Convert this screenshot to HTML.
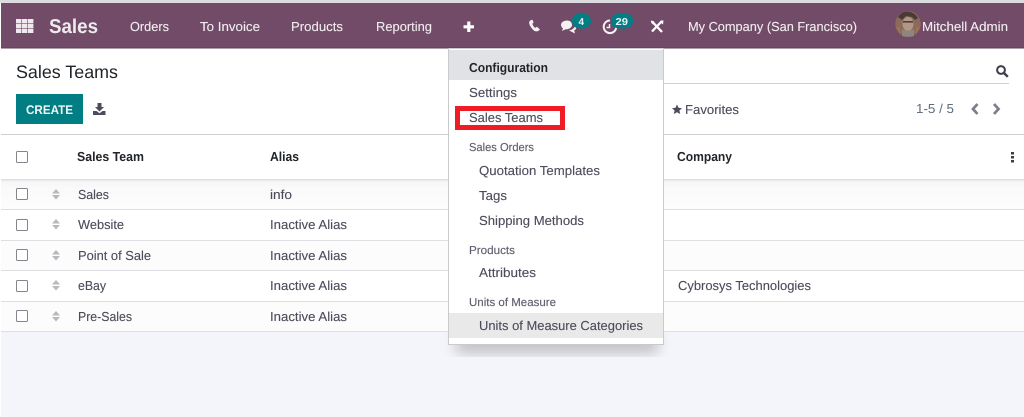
<!DOCTYPE html>
<html><head><meta charset="utf-8"><style>
html,body{margin:0;padding:0;background:#fff;width:1024px;height:417px;overflow:hidden}
svg{display:block;position:absolute;left:0;top:0}
text{font-family:"Liberation Sans",sans-serif;white-space:pre}
.n{font-size:13px;fill:#f0ecef;stroke:#f0ecef;stroke-width:.12px}
.t{font-size:13px;fill:#4c4c5c;stroke:#4c4c5c;stroke-width:.12px}
.h{font-size:13px;font-weight:bold;fill:#212529}
.s{font-size:11.5px;fill:#5f5f6e;stroke:#5f5f6e;stroke-width:.15px}
</style></head><body>
<svg width="1024" height="417" viewBox="0 0 1024 417" xmlns="http://www.w3.org/2000/svg" text-rendering="geometricPrecision">
<defs>
<filter id="sh" x="-20%" y="-20%" width="140%" height="140%"><feGaussianBlur stdDeviation="7"/></filter>
<linearGradient id="g" x1="0" y1="0" x2="0" y2="1"><stop offset="0" stop-color="#f4f4f4"/><stop offset="0.3" stop-color="#fafafa"/><stop offset="1" stop-color="#fcfcfc"/></linearGradient>
</defs>
<!-- page -->
<rect width="1024" height="417" fill="#fff"/>
<rect x="0" y="0" width="1024" height="3" fill="#dcdce0"/>
<rect x="1" y="332" width="1023" height="85" fill="#f4f5fa"/>
<!-- navbar -->
<rect x="1" y="3" width="1023" height="45" fill="#714b67"/>
<rect x="1" y="47.5" width="1023" height="1" fill="#5d3f55"/>
<g fill="#efe9ee">
<rect x="16" y="19" width="5.400" height="4.400"/><rect x="22" y="19" width="5.400" height="4.400"/><rect x="28" y="19" width="5.400" height="4.400"/>
<rect x="16" y="24" width="5.400" height="4.400"/><rect x="22" y="24" width="5.400" height="4.400"/><rect x="28" y="24" width="5.400" height="4.400"/>
<rect x="16" y="29" width="5.400" height="4"/><rect x="22" y="29" width="5.400" height="4"/><rect x="28" y="29" width="5.400" height="4"/>
</g>
<text x="49" y="33" font-size="20" font-weight="bold" fill="#efeaee" textLength="49" lengthAdjust="spacingAndGlyphs">Sales</text>
<text class="n" x="130" y="31" textLength="39" lengthAdjust="spacingAndGlyphs">Orders</text>
<text class="n" x="200" y="31" textLength="60" lengthAdjust="spacingAndGlyphs">To Invoice</text>
<text class="n" x="291" y="31" textLength="52" lengthAdjust="spacingAndGlyphs">Products</text>
<text class="n" x="376" y="31" textLength="56" lengthAdjust="spacingAndGlyphs">Reporting</text>
<path d="M468.800 21.500v10.500M463.500 26.800h10.500" stroke="#fff" stroke-width="3.200" fill="none"/>
<!-- phone -->
<path d="M530.300 20.500c-1.600 1-1.400 3.300 0 5.600 1.500 2.500 3.700 5.300 6 5.300 1.300 0 3.200-1 3.600-1.900l-2.900-2.800-1.700 1.200c-1.300-.5-2.500-2.500-3-4.100l1.300-1.300-1.200-2.900z" fill="#f4f0f3"/>
<!-- chat -->
<path d="M567 20.500c-3.300 0-6 1.900-6 4.500 0 1.400.8 2.600 2 3.400l-1 2.600 3.600-1.700c2.900.2 6.400-1.500 6.400-4.300 0-2.600-1.800-4.500-5-4.500z" fill="#f4f0f3"/>
<path d="M569 30.500l6 3-.8-3c1.300-.7 2-1.700 2-3 0-.8-.2-1.500-.6-2.100-1 2.800-3.500 4.500-6.600 5.100z" fill="#f4f0f3"/>
<rect x="572" y="13.500" width="19" height="15" rx="7.500" fill="#017e84"/>
<text x="578.500" y="25" font-size="10" font-weight="bold" fill="#e9f3f3">4</text>
<!-- clock -->
<path d="M610 20.500a6.300 6.300 0 1 0 6.300 6.300" fill="none" stroke="#f4f0f3" stroke-width="2"/>
<path d="M609.500 24v3.500h-3" fill="none" stroke="#f4f0f3" stroke-width="1.500"/>
<rect x="611" y="13.500" width="22" height="15" rx="7.500" fill="#017e84"/>
<text x="615.500" y="25" font-size="10" font-weight="bold" fill="#e9f3f3" textLength="12.500" lengthAdjust="spacingAndGlyphs">29</text>
<!-- tools -->
<path d="M653 22.500l9 9.500" stroke="#fff" stroke-width="2.300"/>
<path d="M661.500 21.500l-9.500 10" stroke="#fff" stroke-width="2.300"/>
<path d="M651 20.500l3 .8 .8 2.400-2.400 .5-1.400-2zM660.500 20.500l3 0-.5 4-2.500-2z" fill="#fff"/>
<text class="n" x="688" y="31" textLength="169" lengthAdjust="spacingAndGlyphs">My Company (San Francisco)</text>
<!-- avatar -->
<circle cx="908" cy="24" r="12.800" fill="#8a6a58"/>
<path d="M898 17c3-5 8-6 12-5 4 1 6 3 8 6l-3 2-3-3-6-1-4 4z" fill="#4a3a36"/>
<ellipse cx="908" cy="24" rx="5.500" ry="7" fill="#b49684"/>
<rect x="903" y="21" width="10" height="1.600" fill="#4b3d3d"/>
<path d="M902 29c2 2 10 2 12 0l0 7c-3 1-9 1-12 0z" fill="#8d8580"/>
<path d="M896 26l4 2 1 6-2-1zM920 26l-4 2-1 6 2-1z" fill="#a0724f"/>
<text class="n" x="922" y="31" textLength="86" lengthAdjust="spacingAndGlyphs">Mitchell Admin</text>
<!-- control panel -->
<text x="16" y="78" font-size="18" fill="#212529" textLength="102" lengthAdjust="spacingAndGlyphs">Sales Teams</text>
<rect x="16" y="94" width="67" height="30" fill="#017e84"/>
<text x="26" y="114" font-size="12.500" font-weight="bold" fill="#f2f8f8" textLength="47" lengthAdjust="spacingAndGlyphs">CREATE</text>
<path d="M97.500 103h4v4h2.500l-4.500 4.500-4.500-4.500h2.500z" fill="#4c4c5c"/>
<path d="M93 111h3.500l3 2.200 3-2.200h3v4h-12.500z" fill="#4c4c5c"/>
<rect x="664" y="83" width="345" height="1" fill="#cfcfd4"/>
<circle cx="1001" cy="70" r="3.900" fill="none" stroke="#3c3c4a" stroke-width="2"/>
<path d="M1004 73l3.800 3.800" stroke="#3c3c4a" stroke-width="2.400"/>
<path d="M677 104.500l1.500 3.300 3.500.4-2.600 2.300.8 3.500-3.200-1.800-3.200 1.800.8-3.500-2.600-2.300 3.500-.4z" fill="#4c4c5c"/>
<text class="t" x="685" y="114" textLength="54" lengthAdjust="spacingAndGlyphs">Favorites</text>
<text x="916" y="113" font-size="13" fill="#5f6e7c" textLength="38" lengthAdjust="spacingAndGlyphs">1-5 / 5</text>
<path d="M977.500 104l-4.500 5 4.500 5" fill="none" stroke="#7a808c" stroke-width="2.800"/>
<path d="M994 104l4.500 5-4.500 5" fill="none" stroke="#7a808c" stroke-width="2.800"/>
<!-- table -->
<rect x="1" y="134" width="1023" height="1" fill="#cfcfd4"/>
<rect x="1" y="180" width="1023" height="29" fill="url(#g)"/>
<rect x="1" y="241" width="1023" height="29" fill="#fcfcfc"/>
<rect x="1" y="302" width="1023" height="29" fill="#fcfcfc"/>
<g fill="#dfdfe3">
<rect x="1" y="179" width="1023" height="1.500"/>
<rect x="1" y="209" width="1023" height="1"/>
<rect x="1" y="240" width="1023" height="1"/>
<rect x="1" y="270" width="1023" height="1"/>
<rect x="1" y="301" width="1023" height="1"/>
<rect x="1" y="331" width="1023" height="1"/>
</g>
<g fill="#fff" stroke="#85858d" stroke-width="1">
<rect x="16.500" y="151.500" width="11" height="11" rx="1"/>
<rect x="16.500" y="188.500" width="11" height="11" rx="1"/>
<rect x="16.500" y="219.500" width="11" height="11" rx="1"/>
<rect x="16.500" y="249.500" width="11" height="11" rx="1"/>
<rect x="16.500" y="280.500" width="11" height="11" rx="1"/>
<rect x="16.500" y="310.500" width="11" height="11" rx="1"/>
</g>
<g fill="#b8b8be">
<path d="M52 193.500l4-4.500 4 4.500zM52 195l4 4.500 4-4.500z"/>
<path d="M52 223.500l4-4.500 4 4.500zM52 225l4 4.500 4-4.500z"/>
<path d="M52 254.500l4-4.500 4 4.500zM52 256l4 4.500 4-4.500z"/>
<path d="M52 284.500l4-4.500 4 4.500zM52 286l4 4.500 4-4.500z"/>
<path d="M52 315.500l4-4.500 4 4.500zM52 317l4 4.500 4-4.500z"/>
</g>
<text class="h" x="77" y="161" textLength="67" lengthAdjust="spacingAndGlyphs">Sales Team</text>
<text class="h" x="270" y="161" textLength="29" lengthAdjust="spacingAndGlyphs">Alias</text>
<text class="h" x="677" y="161" textLength="55" lengthAdjust="spacingAndGlyphs">Company</text>
<g fill="#3c3c4a"><rect x="1011" y="152" width="3" height="2.500"/><rect x="1011" y="156" width="3" height="2.500"/><rect x="1011" y="160" width="3" height="2.500"/></g>
<text class="t" x="78" y="199" textLength="31" lengthAdjust="spacingAndGlyphs">Sales</text>
<text class="t" x="78" y="229" textLength="46" lengthAdjust="spacingAndGlyphs">Website</text>
<text class="t" x="78" y="260" textLength="73" lengthAdjust="spacingAndGlyphs">Point of Sale</text>
<text class="t" x="78" y="290" textLength="28" lengthAdjust="spacingAndGlyphs">eBay</text>
<text class="t" x="78" y="321" textLength="54" lengthAdjust="spacingAndGlyphs">Pre-Sales</text>
<text class="t" x="270" y="199" textLength="22" lengthAdjust="spacingAndGlyphs">info</text>
<text class="t" x="270" y="229" textLength="77" lengthAdjust="spacingAndGlyphs">Inactive Alias</text>
<text class="t" x="270" y="260" textLength="77" lengthAdjust="spacingAndGlyphs">Inactive Alias</text>
<text class="t" x="270" y="290" textLength="77" lengthAdjust="spacingAndGlyphs">Inactive Alias</text>
<text class="t" x="270" y="321" textLength="77" lengthAdjust="spacingAndGlyphs">Inactive Alias</text>
<text class="t" x="678" y="290" textLength="133" lengthAdjust="spacingAndGlyphs">Cybrosys Technologies</text>
<!-- dropdown -->
<rect x="456" y="335" width="202" height="18" fill="#000" opacity=".22" filter="url(#sh)"/>
<rect x="448.500" y="48.500" width="215" height="296" fill="#fff" stroke="#c9c9ce"/>
<rect x="449" y="50" width="214" height="30" fill="#e1e2e5"/>
<text class="h" x="469" y="72" textLength="79" lengthAdjust="spacingAndGlyphs">Configuration</text>
<text class="t" x="469" y="97" textLength="48" lengthAdjust="spacingAndGlyphs">Settings</text>
<rect x="457.500" y="108.500" width="105" height="19" fill="#fff" stroke="#ee1c25" stroke-width="5"/>
<text class="t" x="469" y="122" textLength="74" lengthAdjust="spacingAndGlyphs">Sales Teams</text>
<text class="s" x="469" y="151" textLength="65" lengthAdjust="spacingAndGlyphs">Sales Orders</text>
<text class="t" x="479" y="175" textLength="121" lengthAdjust="spacingAndGlyphs">Quotation Templates</text>
<text class="t" x="479" y="200" textLength="28" lengthAdjust="spacingAndGlyphs">Tags</text>
<text class="t" x="479" y="225" textLength="105" lengthAdjust="spacingAndGlyphs">Shipping Methods</text>
<text class="s" x="469" y="254" textLength="46" lengthAdjust="spacingAndGlyphs">Products</text>
<text class="t" x="479" y="277" textLength="57" lengthAdjust="spacingAndGlyphs">Attributes</text>
<text class="s" x="469" y="306" textLength="87" lengthAdjust="spacingAndGlyphs">Units of Measure</text>
<rect x="449" y="313" width="214" height="25" fill="#e9e9e9"/>
<text class="t" x="479" y="330" textLength="164" lengthAdjust="spacingAndGlyphs">Units of Measure Categories</text>
</svg>
</body></html>
